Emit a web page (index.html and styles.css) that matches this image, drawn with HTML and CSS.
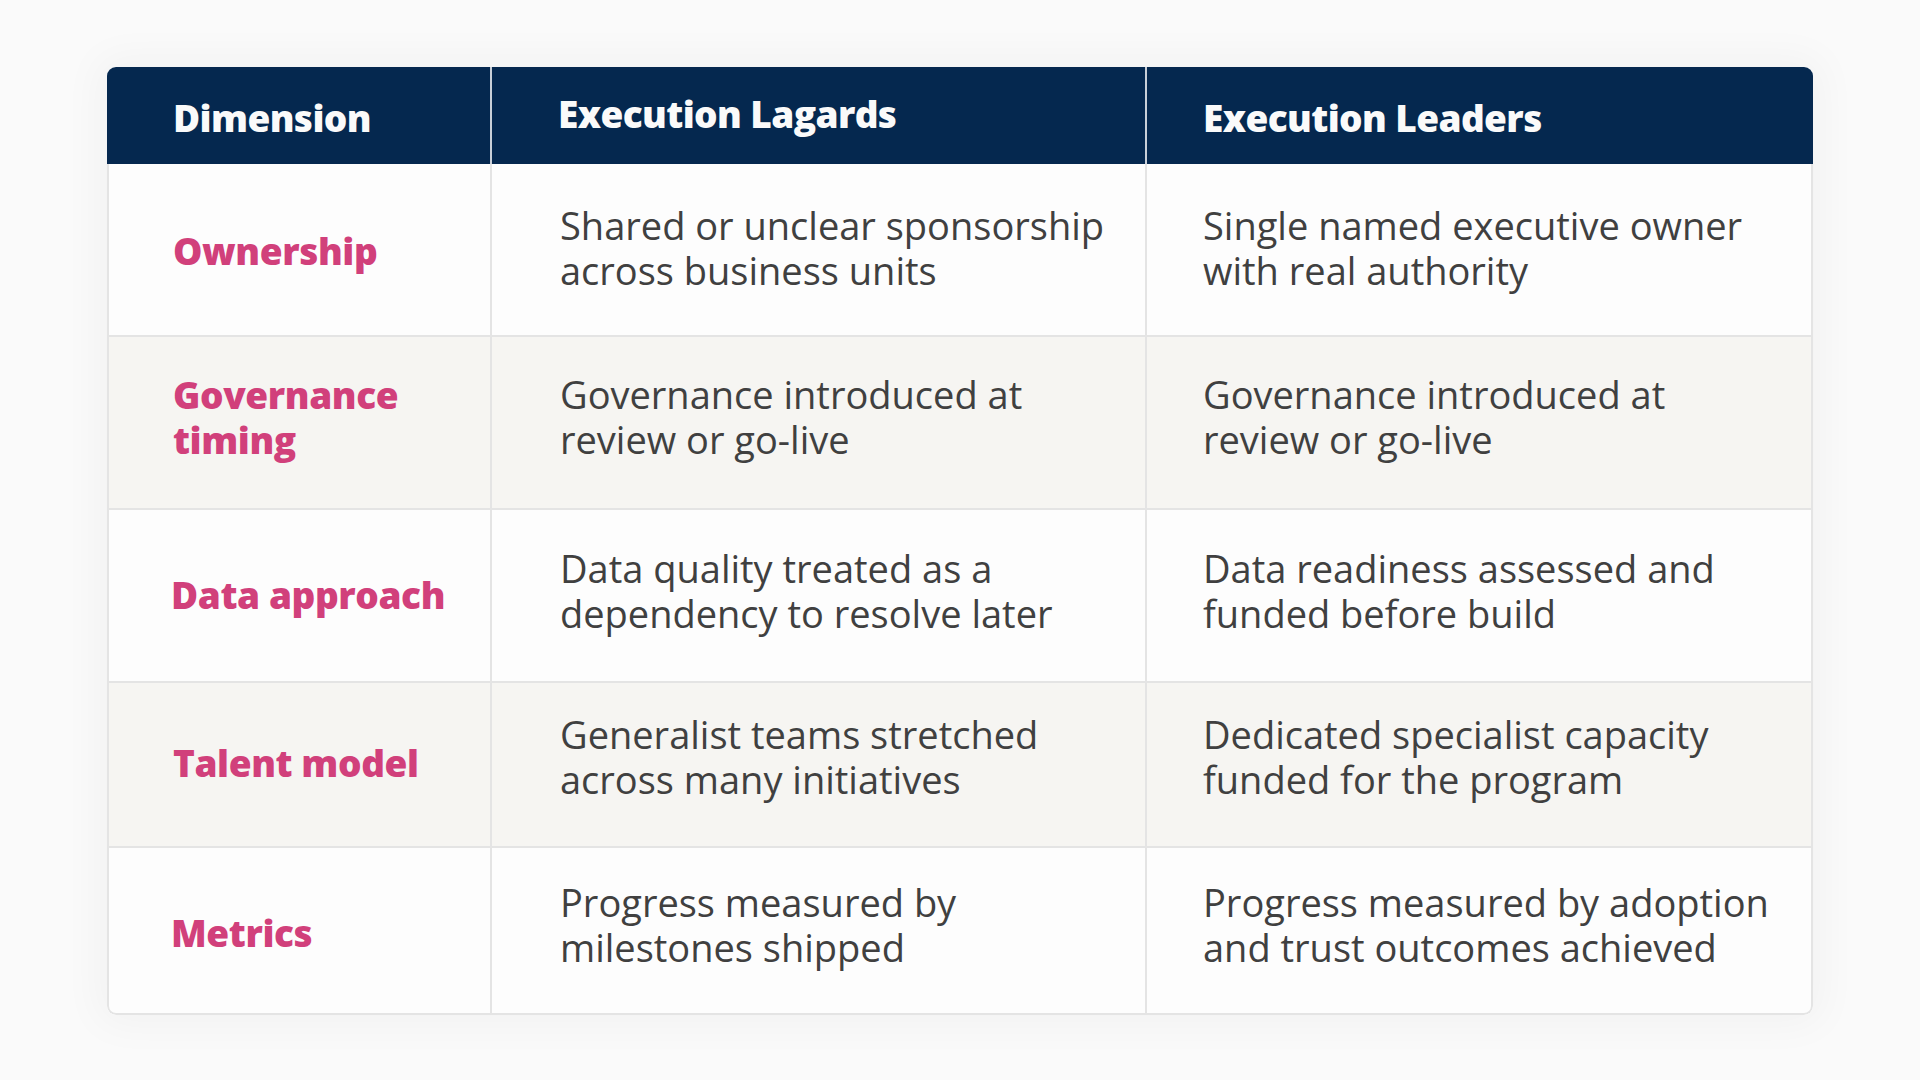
FILE: index.html
```html
<!DOCTYPE html>
<html lang="en">
<head>
<meta charset="utf-8">
<title>Execution Lagards vs Execution Leaders</title>
<link rel="stylesheet" href="styles.css">
</head>
<body>
<main class="page">
  <div class="table">
    <div class="row head">
      <div class="cell c1">Dimension</div>
      <div class="cell c2 lift">Execution Lagards</div>
      <div class="cell c3">Execution Leaders</div>
    </div>
    <div class="tbody">
      <div class="row r1">
        <div class="cell c1 label">Ownership</div>
        <div class="cell c2">Shared or unclear sponsorship<br>across business units</div>
        <div class="cell c3">Single named executive owner<br>with real authority</div>
      </div>
      <div class="row r2 alt">
        <div class="cell c1 label">Governance<br>timing</div>
        <div class="cell c2">Governance introduced at<br>review or go-live</div>
        <div class="cell c3">Governance introduced at<br>review or go-live</div>
      </div>
      <div class="row r3">
        <div class="cell c1 label">Data approach</div>
        <div class="cell c2">Data quality treated as a<br>dependency to resolve later</div>
        <div class="cell c3">Data readiness assessed and<br>funded before build</div>
      </div>
      <div class="row r4 alt">
        <div class="cell c1 label">Talent model</div>
        <div class="cell c2">Generalist teams stretched<br>across many initiatives</div>
        <div class="cell c3">Dedicated specialist capacity<br>funded for the program</div>
      </div>
      <div class="row r5">
        <div class="cell c1 label">Metrics</div>
        <div class="cell c2">Progress measured by<br>milestones shipped</div>
        <div class="cell c3">Progress measured by adoption<br>and trust outcomes achieved</div>
      </div>
    </div>
  </div>
</main>
</body>
</html>
```

FILE: styles.css
```css
* { box-sizing: border-box; }
html, body {
  margin: 0;
  padding: 0;
  background: #fafafa;
}
.page {
  width: 1920px;
  height: 1080px;
  padding: 67px 0 0 107px;
}
.table {
  width: 1706px;
  border-radius: 9px;
  background: #fdfdfd;
  box-shadow: 0 0 40px 10px rgba(0, 0, 0, 0.035);
  overflow: hidden;
}
.tbody {
  border: 2px solid #e4e4e4;
  border-top: none;
  border-radius: 0 0 9px 9px;
}
.row {
  display: grid;
  grid-template-columns: 381px 655px 1fr;
  border-top: 2px solid #e4e4e4;
}
.row.head {
  grid-template-columns: 383px 655px 1fr;
  height: 97px;
  background: #05284f;
  border-top: none;
}
.tbody .row:first-child { border-top: none; }
.r1 { height: 171px; }
.r2 { height: 173px; }
.r3 { height: 173px; }
.r4 { height: 165px; }
.r5 { height: 167px; }
.row.alt { background: #f6f5f2; }
.cell {
  display: flex;
  align-items: center;
  font-family: "Open Sans", "Liberation Sans", sans-serif;
  font-weight: 500;
  font-size: 38px;
  line-height: 45px;
  letter-spacing: 0;
  color: #404040;
}
.r1 .cell { padding-bottom: 4px; }
.r2 .cell { padding-bottom: 12px; }
.r3 .cell { padding-bottom: 10px; }
.r4 .cell { padding-bottom: 15px; }
.r5 .cell { padding-bottom: 11px; }
.cell.c1 { padding-left: 64px; }
.cell.c2 { padding-left: 68px; border-left: 2px solid #e4e4e4; }
.cell.c3 { padding-left: 56px; border-left: 2px solid #e4e4e4; }
.head .cell {
  font-size: 37px;
  font-weight: 800;
  color: #fafafa;
  letter-spacing: -0.6px;
  padding-bottom: 0;
  padding-top: 4px;
}
.head .cell.c1 { padding-left: 66px; }
.head .cell.c2 { padding-left: 66px; border-left-color: #c9cfd8; }
.head .cell.c3 { padding-left: 56px; border-left-color: #c9cfd8; }
.head .cell.lift { padding-top: 0; padding-bottom: 4px; }
.cell.label {
  font-size: 37px;
  font-weight: 800;
  color: #d1407b;
  letter-spacing: -0.4px;
}
.r1 .cell.label { padding-bottom: 0; padding-top: 2px; }
.r2 .cell.label { padding-bottom: 12px; }
.r3 .cell.label { padding-left: 62px; padding-bottom: 3px; }
.r4 .cell.label { padding-bottom: 4px; }
.r5 .cell.label { padding-left: 62px; padding-bottom: 0; padding-top: 4px; }
```
